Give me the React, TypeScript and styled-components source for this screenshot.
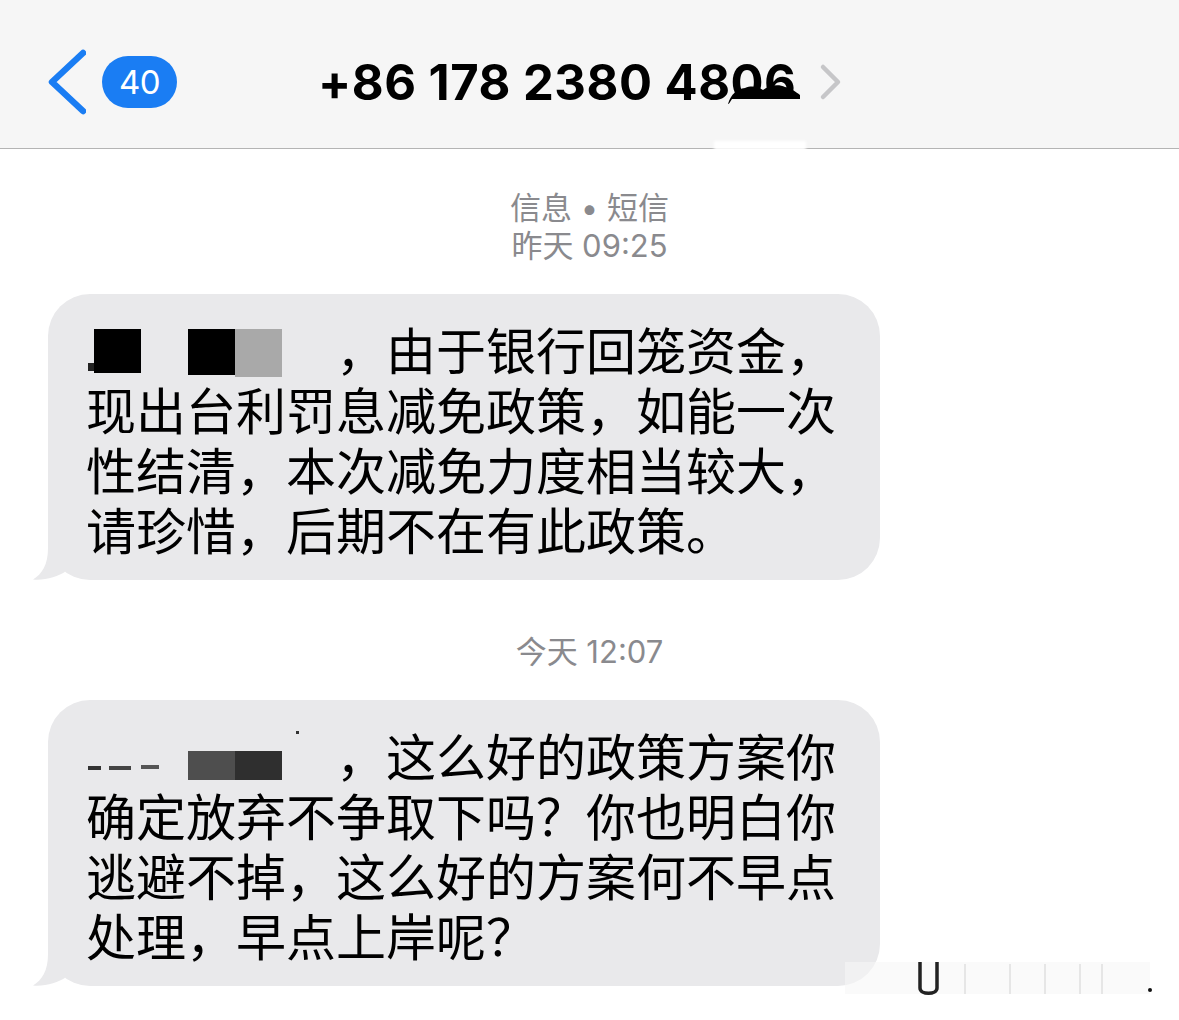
import styled, { createGlobalStyle } from 'styled-components'

const GlobalStyle = createGlobalStyle`
  html, body {
    margin: 0;
    padding: 0;
    background: #fff;
  }
  body {
    font-family: Inter, "Noto Sans CJK SC", sans-serif;
  }
`

const Page = styled.div`
  position: relative;
  width: 1179px;
  height: 1020px;
  background: #fff;
  overflow: hidden;
`

// ---- top bar

const Header = styled.header`
  position: relative;
  height: 132px;
  padding: 16px 0 0 46px;
  background: #f6f6f6;
  border-bottom: 1px solid #b4b4b4;
  display: flex;
  align-items: center;
`

const BackIcon = styled.svg`
  width: 40px;
  height: 66px;
  flex-shrink: 0;
`

const CountBadge = styled.div`
  margin-left: 16px;
  width: 75px;
  height: 52px;
  border-radius: 26px;
  background: #1a7df3;
  color: #fff;
  font-family: Inter, sans-serif;
  font-size: 33px;
  font-weight: 400;
  display: flex;
  align-items: center;
  justify-content: center;
  letter-spacing: -0.5px;
`

const Title = styled.h1`
  margin: 0 0 0 141px;
  font-family: Inter, "Liberation Sans", sans-serif;
  font-size: 49px;
  font-weight: 700;
  letter-spacing: 0.5px;
  color: #000;
  white-space: nowrap;
`

const Scribbled = styled.span`
  position: relative;
  display: inline-block;
`

const ScribbleMark = styled.svg`
  position: absolute;
  left: -3px;
  bottom: 2px;
  width: 72px;
  height: 26px;
`

const ForwardIcon = styled.svg`
  margin-left: 23px;
  width: 24px;
  height: 38px;
  flex-shrink: 0;
`

const Smudge = styled.div`
  position: absolute;
  left: 714px;
  top: 141px;
  width: 92px;
  height: 9px;
  background: #fff;
  filter: blur(1.5px);
`

// ---- thread

const Thread = styled.main`
  display: flex;
  flex-direction: column;
  align-items: center;
`

const Stamp = styled.div<{ $gap: number }>`
  margin-top: ${({ $gap }) => $gap}px;
  text-align: center;
  font-family: Inter, "Noto Sans CJK SC", sans-serif;
  font-size: 31px;
  line-height: 38px;
  color: #8a8a8e;
`

const Bubble = styled.div`
  position: relative;
  align-self: flex-start;
  margin: 29px 0 0 48px;
  width: 832px;
  box-sizing: border-box;
  padding: 24px 38px 22px;
  background: #e9e9eb;
  border-radius: 42px;
`

const Tail = styled.svg`
  position: absolute;
  left: -15px;
  bottom: 0;
  width: 50px;
  height: 42px;
`

const Line = styled.div`
  height: 60px;
  line-height: 60px;
  font-family: "Noto Sans CJK SC", sans-serif;
  font-size: 50px;
  color: #000;
  white-space: nowrap;
`

const Mask = styled.span<{ $w: number; $h?: number; $top?: number; $c?: string }>`
  display: inline-block;
  vertical-align: top;
  width: ${({ $w }) => $w}px;
  height: ${({ $h }) => $h ?? 1}px;
  margin-top: ${({ $top }) => $top ?? 0}px;
  background: ${({ $c }) => $c ?? 'transparent'};
`

const Watermark = styled.svg`
  position: absolute;
  left: 840px;
  top: 956px;
  width: 320px;
  height: 44px;
`

const BubbleTail = () => (
  <Tail viewBox="0 0 50 42">
    <path d="M15 0 L15 10 C15 27 9 36 0 41.5 C12 42.5 25 39 33 33 L33 0 Z" fill="#e9e9eb" />
  </Tail>
)

export default function App() {
  return (
    <Page>
      <GlobalStyle />
      <Header>
        <BackIcon viewBox="0 0 40 66">
          <polyline points="37,4 6,33 37,62" fill="none" stroke="#1a7df3" strokeWidth="6.5" strokeLinecap="round" strokeLinejoin="round" />
        </BackIcon>
        <CountBadge>40</CountBadge>
        <Title>
          +86 178 2380 48
          <Scribbled>
            06
            <ScribbleMark viewBox="0 0 72 26" preserveAspectRatio="none">
              <rect x="4" y="13" width="68" height="13" fill="#f6f6f6" />
              <path d="M0 20 C3 10 9 5 17 4 C24 1 30 3 35 6 C41 1 51 0 57 3 C63 4 68 8 72 11 L72 15 L4 15 C2 18 1 20 0 20 Z" fill="#000" />
            </ScribbleMark>
          </Scribbled>
        </Title>
        <ForwardIcon viewBox="0 0 24 38">
          <polyline points="4,4 19,19 4,34" fill="none" stroke="#c6c6c8" strokeWidth="4.5" strokeLinecap="round" strokeLinejoin="round" />
        </ForwardIcon>
        <Smudge />
      </Header>

      <Thread>
        <Stamp $gap={40}>
          信息 • 短信
          <br />
          昨天 09:25
        </Stamp>

        <Bubble>
          <Line>
            <Mask $w={2} />
            <Mask $w={6} $h={8} $top={45} $c="#222" />
            <Mask $w={47} $h={44} $top={11} $c="#000" />
            <Mask $w={47} />
            <Mask $w={47} $h={46} $top={11} $c="#000" />
            <Mask $w={47} $h={48} $top={11} $c="#a9a9a9" />
            <Mask $w={54} />
            ，由于银行回笼资金，
          </Line>
          <Line>现出台利罚息减免政策，如能一次</Line>
          <Line>性结清，本次减免力度相当较大，</Line>
          <Line>请珍惜，后期不在有此政策。</Line>
          <BubbleTail />
        </Bubble>

        <Stamp $gap={53}>今天 12:07</Stamp>

        <Bubble>
          <Line>
            <Mask $w={2} />
            <Mask $w={13} $h={4} $top={42} $c="#333" />
            <Mask $w={8} />
            <Mask $w={22} $h={4} $top={42} $c="#444" />
            <Mask $w={10} />
            <Mask $w={18} $h={4} $top={41} $c="#555" />
            <Mask $w={29} />
            <Mask $w={47} $h={29} $top={27} $c="#4e4e4e" />
            <Mask $w={47} $h={29} $top={27} $c="#2f2f2f" />
            <Mask $w={14} />
            <Mask $w={3} $h={3} $top={7} $c="#333" />
            <Mask $w={37} />
            ，这么好的政策方案你
          </Line>
          <Line>确定放弃不争取下吗？你也明白你</Line>
          <Line>逃避不掉，这么好的方案何不早点</Line>
          <Line>处理，早点上岸呢？</Line>
          <BubbleTail />
        </Bubble>
      </Thread>

      <Watermark viewBox="0 0 320 44">
        <rect x="5" y="6" width="305" height="32" fill="#f6f6f6" opacity="0.6" />
        <g stroke="#e6e6e6" strokeWidth="2">
          <line x1="125" y1="8" x2="125" y2="38" />
          <line x1="170" y1="8" x2="170" y2="38" />
          <line x1="205" y1="8" x2="205" y2="38" />
          <line x1="240" y1="8" x2="240" y2="38" />
          <line x1="262" y1="8" x2="262" y2="38" />
        </g>
        <path d="M80 6 L80 32 C80 39 97 39 97 32 L97 6" fill="none" stroke="#222" strokeWidth="3.5" />
        <circle cx="310" cy="34" r="2" fill="#111" />
      </Watermark>
    </Page>
  )
}
